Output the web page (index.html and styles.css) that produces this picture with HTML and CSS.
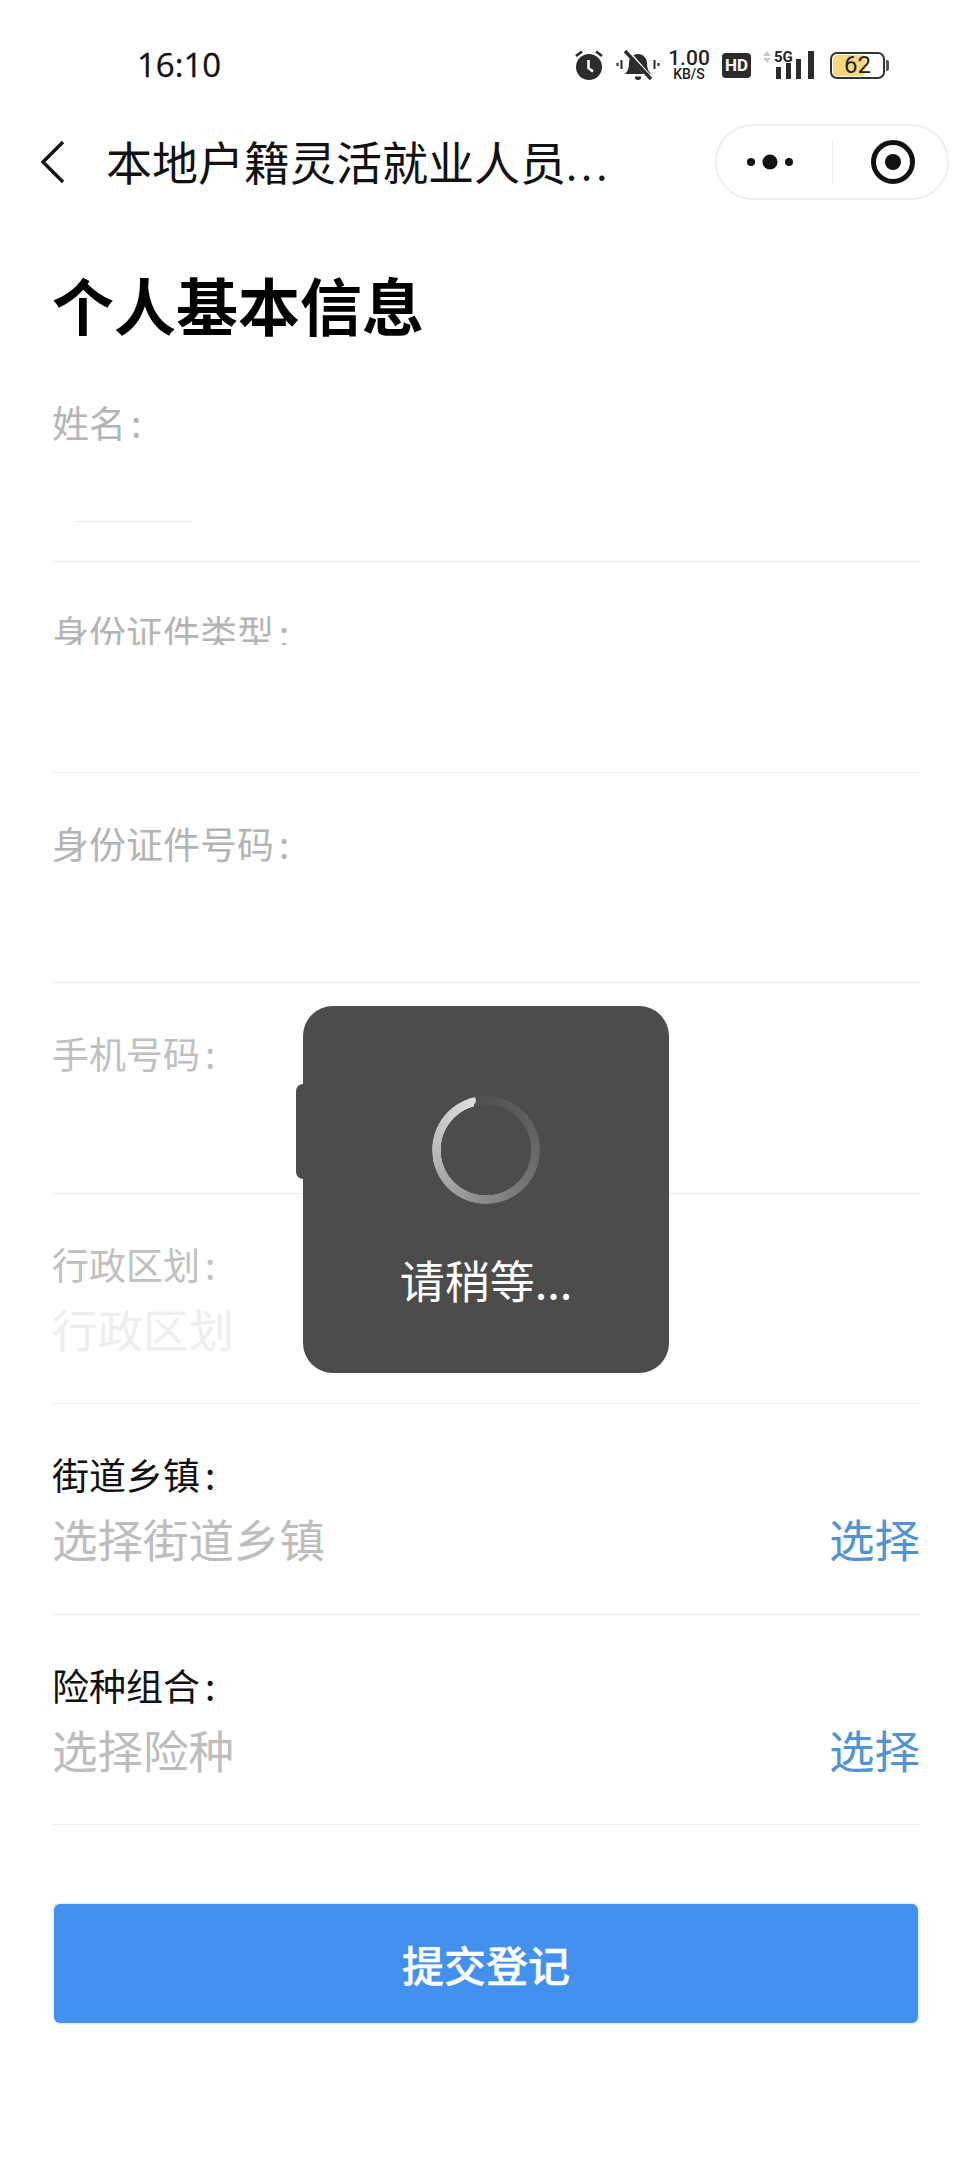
FILE: index.html
```html
<!DOCTYPE html>
<html lang="zh-CN">
  <head>
    <title>个人基本信息</title>
    <meta charset="UTF-8">
    <link rel="stylesheet" href="styles.css">
  </head>
  <body>
    <div class="status">
      <span class="time">16:10</span>
      <div class="status-icons">
        <svg class="ic-alarm" width="30" height="32" viewBox="0 0 30 32">
          <circle cx="15" cy="18" r="13" fill="#2b2b2b"/>
          <path d="M2 7 8 2.500M28 7 22 2.500" stroke="#2b2b2b" stroke-width="2.600" fill="none"/>
          <path d="M14.500 11v8l4.500 3.500" stroke="#fff" stroke-width="2.600" fill="none"/>
        </svg>
        <svg class="ic-bell" width="44" height="32" viewBox="0 0 44 32">
          <path d="M9 25c3-3 4-6 4-11 0-5 4-9 9-9s9 4 9 9c0 5 1 8 4 11Z" fill="#2b2b2b"/>
          <path d="M19 27.500h6v1a3 2.500 0 0 1-6 0Z" fill="#2b2b2b"/>
          <path d="M10 1 36 31" stroke="#fff" stroke-width="4.500"/>
          <path d="M9 2 35 30" stroke="#2b2b2b" stroke-width="3.400"/>
          <path d="M1.500 14v3M5.500 11v9M38.500 11v9M42.500 14v3" stroke="#2b2b2b" stroke-width="2" fill="none"/>
        </svg>
        <div class="speed"><b>1.00</b><i>KB/S</i></div>
        <span class="hd">HD</span>
        <div class="signal">
          <svg class="ic-arrows" width="8" height="12" viewBox="0 0 8 12">
            <path d="M4 0 8 5H0Z" fill="#ccc"/>
            <path d="M4 12 8 7H0Z" fill="#ccc"/>
          </svg>
          <span class="five-g">5G</span>
          <svg class="ic-bars" width="42" height="28" viewBox="0 0 42 28">
            <path d="M0 16h5v12H0ZM10 12h5v16h-5ZM20 8h5v20h-5ZM32 0h6v28h-6Z" fill="#2b2b2b"/>
          </svg>
        </div>
        <div class="battery"><span class="battery-fill"></span><span class="battery-num">62</span></div>
      </div>
    </div>

    <div class="nav">
      <svg class="back" width="26" height="44" viewBox="0 0 26 44">
        <path d="M23 2 3 22l20 20" stroke="#111" stroke-width="3.400" fill="none"/>
      </svg>
      <div class="nav-title">本地户籍灵活就业人员<span class="dots">...</span></div>
      <div class="capsule">
        <svg width="58" height="16" viewBox="0 0 58 16">
          <circle cx="8" cy="8" r="4" fill="#111"/>
          <circle cx="27" cy="8" r="7.500" fill="#111"/>
          <circle cx="46" cy="8" r="4" fill="#111"/>
        </svg>
        <span class="capsule-line"></span>
        <svg width="46" height="46" viewBox="0 0 46 46">
          <circle cx="23" cy="23" r="19.500" stroke="#111" stroke-width="5" fill="none"/>
          <circle cx="23" cy="23" r="8" fill="#111"/>
        </svg>
      </div>
    </div>

    <h1>个人基本信息</h1>

    <form class="form">
      <div class="row">
        <div class="label">姓名<span class="colon">:</span></div>
        <div class="value"><span class="name-line"></span></div>
      </div>
      <div class="row">
        <div class="label label-cut">身份证件类型<span class="colon">:</span></div>
        <div class="value"></div>
      </div>
      <div class="row">
        <div class="label">身份证件号码<span class="colon">:</span></div>
        <div class="value"></div>
      </div>
      <div class="row">
        <div class="label label-light">手机号码<span class="colon">:</span></div>
        <div class="value"></div>
      </div>
      <div class="row">
        <div class="label label-light">行政区划<span class="colon">:</span></div>
        <div class="value value-faded">行政区划</div>
      </div>
      <div class="row">
        <div class="label label-on">街道乡镇<span class="colon">:</span></div>
        <div class="value">选择街道乡镇<a class="pick">选择</a></div>
      </div>
      <div class="row">
        <div class="label label-on">险种组合<span class="colon">:</span></div>
        <div class="value">选择险种<a class="pick">选择</a></div>
      </div>
      <button class="submit" type="button">提交登记</button>
    </form>

    <div class="toast">
      <span class="smudge"></span>
      <div class="spinner"></div>
      <div class="toast-text">请稍等...</div>
    </div>
  </body>
</html>
```

FILE: styles.css
```css
html, body {
  margin: 0;
  height: 2160px;
  overflow: hidden;
  background: #fff;
}
body {
  position: relative;
  font-family: "Noto Sans CJK SC", sans-serif;
  color: #111;
}

/* status bar */
.status {
  display: flex;
  align-items: center;
  justify-content: space-between;
  height: 66px;
  padding: 32px 87px 0 137px;
  box-sizing: content-box;
}
.time {
  font-family: "Open Sans", sans-serif;
  font-size: 33px;
  font-weight: 500;
  line-height: 32px;
  color: #111;
  -webkit-text-stroke: 0.3px #111;
}
.status-icons {
  display: flex;
  align-items: center;
  height: 32px;
}
.ic-alarm {
  margin-right: 12px;
}
.ic-bell {
  margin-right: 7px;
}
.speed {
  display: flex;
  flex-direction: column;
  align-items: center;
  width: 44px;
  margin-right: 11px;
  font-family: "Roboto", sans-serif;
  color: #222;
}
.speed b {
  font-weight: 500;
  font-size: 21px;
  line-height: 18px;
}
.speed i {
  font-style: normal;
  font-weight: 500;
  font-size: 14px;
  line-height: 14px;
}
.hd {
  width: 29px;
  height: 25px;
  margin-right: 12px;
  border-radius: 4px;
  background: #2b2b2b;
  color: #fff;
  font-family: "Roboto", sans-serif;
  font-weight: 700;
  font-size: 17px;
  line-height: 25px;
  text-align: center;
}
.signal {
  display: grid;
  grid-template-columns: 11px 34px;
  grid-template-rows: 13px 15px;
  width: 52px;
  margin-right: 15px;
  position: relative;
}
.ic-arrows {
  grid-column: 1;
  grid-row: 1;
}
.five-g {
  grid-column: 2;
  grid-row: 1;
  font-family: "Roboto", sans-serif;
  font-weight: 700;
  font-size: 15px;
  line-height: 13px;
  color: #222;
}
.ic-bars {
  position: absolute;
  left: 13px;
  bottom: 0;
}
.battery {
  position: relative;
  width: 55px;
  height: 27px;
  box-sizing: border-box;
  border: 2px solid #333;
  border-radius: 7px;
  text-align: center;
  font-family: "Roboto", sans-serif;
  font-size: 24px;
  line-height: 23px;
  color: #222;
}
.battery:after {
  content: "";
  position: absolute;
  right: -6px;
  top: 6px;
  width: 3px;
  height: 11px;
  border-radius: 0 2px 2px 0;
  background: #555;
}
.battery-fill {
  position: absolute;
  left: 1px;
  top: 1px;
  bottom: 1px;
  width: 32px;
  border-radius: 4px;
  background: #f8d77e;
}
.battery-num {
  position: relative;
}

/* nav */
.nav {
  display: flex;
  align-items: center;
  height: 75px;
  margin-top: 26px;
  padding: 0 23px 0 40px;
}
.back {
  margin-right: 40px;
}
.nav-title {
  flex: 1;
  font-size: 46px;
  line-height: 75px;
  white-space: nowrap;
}
.dots {
  letter-spacing: 4px;
  font-size: 40px;
}
.capsule {
  display: flex;
  align-items: center;
  justify-content: space-between;
  width: 234px;
  height: 76px;
  box-sizing: border-box;
  padding: 0 31px 0 26px;
  border: 2px solid #eee;
  border-radius: 38px;
}
.capsule-line {
  width: 1px;
  height: 44px;
  margin-right: 6px;
  background: #eee;
}

h1 {
  margin: 65px 0 0;
  padding-left: 52px;
  font-size: 62px;
  line-height: 80px;
  font-weight: 700;
  color: #000;
}

/* form */
.form {
  margin-top: 7.5px;
  padding: 0 52px;
}
.row {
  height: 210.5px;
  box-sizing: border-box;
  padding-top: 45px;
  border-bottom: 1px solid #eee;
}
.label {
  height: 50px;
  font-size: 37px;
  line-height: 50px;
  color: #b4b4b4;
}
.colon {
  margin-left: 5px;
}
.label-cut {
  height: 38px;
  margin-bottom: 12px;
  overflow: hidden;
}
.label-light {
  color: #c0c0c0;
}
.label-on {
  color: #111;
}
.value {
  display: flex;
  justify-content: space-between;
  height: 78px;
  font-size: 45.5px;
  line-height: 78px;
  color: #bdbdbd;
}
.value-faded {
  color: #eee;
}
.pick {
  color: #4f94d4;
}
.name-line {
  width: 117px;
  height: 1px;
  margin: 74px 0 0 23px;
  background: #eee;
}
.submit {
  display: block;
  width: 864px;
  height: 119px;
  margin: 79px 2px 0;
  border: 0;
  border-radius: 6px;
  background: #4391ee;
  box-shadow: 0 0 3px rgba(67,145,238,0.4);
  color: #fff;
  font-family: inherit;
  font-size: 42px;
  font-weight: 500;
  -webkit-text-stroke: 0.4px #fff;
}

/* loading toast */
.toast {
  position: absolute;
  left: 303px;
  top: 1006px;
  width: 366px;
  height: 367px;
  display: flex;
  flex-direction: column;
  align-items: center;
  border-radius: 30px;
  background: #4c4c4c;
}
.smudge {
  position: absolute;
  left: -7px;
  top: 78px;
  width: 14px;
  height: 95px;
  border-radius: 7px 0 0 7px;
  background: #4c4c4c;
}
.spinner {
  position: relative;
  width: 108px;
  height: 108px;
  margin-top: 90px;
  border-radius: 50%;
  background: conic-gradient(from -15deg, rgba(255,255,255,0.02) 0deg, #5f5f5f 70deg, #6e6e6e 130deg, #8c8c8c 200deg, #b4b4b4 270deg, #dcdcdc 360deg);
  -webkit-mask: radial-gradient(circle, transparent 45px, #000 45.5px);
  mask: radial-gradient(circle, transparent 45px, #000 45.5px);
}
.spinner:after {
  content: "";
  position: absolute;
  left: 35px;
  top: 0;
  width: 9px;
  height: 9px;
  border-radius: 50%;
  background: #dcdcdc;
}
.toast-text {
  margin-top: 44px;
  font-size: 45px;
  line-height: 64px;
  color: #fff;
}
```
